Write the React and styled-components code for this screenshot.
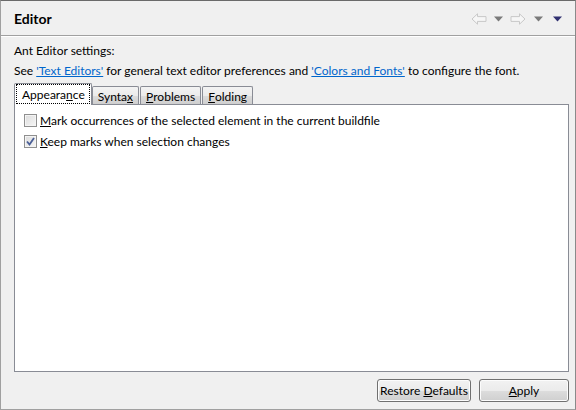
import React from "react";
import styled, { createGlobalStyle } from "styled-components";

const Global = createGlobalStyle`
  html, body { margin: 0; padding: 0; background: #f0f0f0; }
  body { font-family: Lato, "Noto Sans", sans-serif; font-size: 12px; color: #000; }
`;

const Window = styled.div`
  box-sizing: border-box;
  width: 576px;
  height: 410px;
  border: 1px solid #a0a0a0;
  border-top-color: #6a6a6a;
  border-right-color: #8a8a8a;
  background: #f0f0f0;
  display: flex;
  flex-direction: column;
`;

const Header = styled.div`
  height: 34px;
  display: flex;
  align-items: center;
  justify-content: space-between;
  padding: 0 13px 0 13px;
  border-bottom: 1px solid #a0a0a0;
  box-shadow: 0 1px 0 #ffffff;
`;

const Title = styled.div`
  font-weight: bold;
  font-size: 14px;
`;

const Nav = styled.div`
  display: flex;
  align-items: center;
  margin-top: 2px;
`;

const NavBtn = styled.span`
  display: inline-flex;
  align-items: center;
  margin-left: ${(p) => p.$gap || 0}px;
`;

const Body = styled.div`
  flex: 1;
  display: flex;
  flex-direction: column;
  padding: 5px 6px 7px 13px;
`;

const Line = styled.div`
  height: 20px;
  line-height: 20px;
  white-space: nowrap;
`;

const Link = styled.a`
  color: #0066cc;
  text-decoration: underline;
  cursor: pointer;
`;

const TabBar = styled.div`
  display: flex;
  align-items: flex-end;
  height: 21px;
  margin-top: 2px;
  padding-left: 1px;
  position: relative;
  z-index: 1;
`;

const Tab = styled.div`
  box-sizing: border-box;
  height: ${(p) => (p.$active ? 22 : 18)}px;
  padding: ${(p) => (p.$active ? "0 1px" : "0 5px")};
  margin-right: ${(p) => (p.$active ? 0 : 1)}px;
  margin-left: ${(p) => (p.$first ? -1 : 0)}px;
  border: 1px solid #898c95;
  border-bottom: none;
  border-radius: 2px 2px 0 0;
  background: ${(p) =>
    p.$active ? "#ffffff" : "linear-gradient(#f3f3f3, #ebebeb 50%, #dddddd 51%, #cfcfcf)"};
  display: flex;
  align-items: ${(p) => (p.$active ? "stretch" : "center")};
  margin-bottom: ${(p) => (p.$active ? -1 : 0)}px;
  padding-top: ${(p) => (p.$active ? 0 : 1)}px;
`;

const TabLabel = styled.span`
  display: flex;
  align-items: center;
  padding: 0 ${(p) => (p.$focus ? 4 : 0)}px 0 ${(p) => (p.$focus ? 5 : 0)}px;
  border: ${(p) => (p.$focus ? "1px dotted #000" : "none")};
  margin: ${(p) => (p.$focus ? "0 0 1px 0" : "0")};
`;

const Panel = styled.div`
  flex: 1;
  background: #ffffff;
  border: 1px solid #898c95;
  padding: 6px 9px;
  display: flex;
  flex-direction: column;
  gap: 3px;
`;

const CheckRow = styled.label`
  display: flex;
  align-items: center;
  height: 18px;
  gap: 3px;
`;

const Box = styled.span`
  box-sizing: border-box;
  width: 13px;
  height: 13px;
  border: 1px solid #8f8f8f;
  background: linear-gradient(135deg, #dcdcdc, #f6f6f6);
  box-shadow: inset 0 0 0 1px #f4f4f4;
  display: inline-flex;
  align-items: center;
  justify-content: center;
`;

const U = styled.span`
  text-decoration: underline;
`;

const Footer = styled.div`
  display: flex;
  justify-content: flex-end;
  gap: 8px;
  margin-top: 7px;
`;

const Button = styled.button`
  box-sizing: border-box;
  height: 23px;
  width: ${(p) => p.$w}px;
  padding: 0;
  font: inherit;
  font-size: 12px;
  color: #000;
  border: 1px solid #707070;
  border-radius: 3px;
  background: linear-gradient(#f2f2f2, #ebebeb 50%, #dddddd 51%, #cfcfcf);
  box-shadow: inset 0 0 0 1px #fcfcfc;
`;

const ArrowIcon = ({ dir }) => (
  <svg width="16" height="12" viewBox="0 0 16 12" style={{ transform: dir === "left" ? "none" : "scaleX(-1)" }}>
    <path
      d="M1 6 L6.5 0.8 L6.5 3.6 L15 3.6 L15 8.4 L6.5 8.4 L6.5 11.2 Z"
      fill="#f6f6f6"
      stroke="#c8c8c8"
      strokeWidth="1"
      strokeLinejoin="round"
    />
  </svg>
);

const Tri = ({ color }) => (
  <svg width="9" height="6" viewBox="0 0 9 6">
    <path d="M0 0.5 L9 0.5 L4.5 5.5 Z" fill={color} />
  </svg>
);

const Check = () => (
  <svg width="9" height="9" viewBox="0 0 9 9">
    <path d="M1 4.5 L3.5 7.5 L8 1" fill="none" stroke="#4a5f97" strokeWidth="1.8" />
  </svg>
);

export default function App() {
  return (
    <>
      <Global />
      <Window>
        <Header>
          <Title>Editor</Title>
          <Nav>
            <NavBtn><ArrowIcon dir="left" /></NavBtn>
            <NavBtn $gap={7}><Tri color="#7a7a7a" /></NavBtn>
            <NavBtn $gap={7}><ArrowIcon dir="right" /></NavBtn>
            <NavBtn $gap={8}><Tri color="#7a7a7a" /></NavBtn>
            <NavBtn $gap={10}><Tri color="#303070" /></NavBtn>
          </Nav>
        </Header>
        <Body>
          <Line>Ant Editor settings:</Line>
          <Line>
            See <Link>'Text Editors'</Link> for general text editor preferences and{" "}
            <Link>'Colors and Fonts'</Link> to configure the font.
          </Line>
          <TabBar>
            <Tab $active $first>
              <TabLabel $focus>Appeara<U>n</U>ce</TabLabel>
            </Tab>
            <Tab>
              <TabLabel>Synta<U>x</U></TabLabel>
            </Tab>
            <Tab>
              <TabLabel><U>P</U>roblems</TabLabel>
            </Tab>
            <Tab>
              <TabLabel><U>F</U>olding</TabLabel>
            </Tab>
          </TabBar>
          <Panel>
            <CheckRow>
              <Box />
              <span><U>M</U>ark occurrences of the selected element in the current buildfile</span>
            </CheckRow>
            <CheckRow>
              <Box><Check /></Box>
              <span><U>K</U>eep marks when selection changes</span>
            </CheckRow>
          </Panel>
          <Footer>
            <Button $w={94}>Restore <U>D</U>efaults</Button>
            <Button $w={90}><U>A</U>pply</Button>
          </Footer>
        </Body>
      </Window>
    </>
  );
}
